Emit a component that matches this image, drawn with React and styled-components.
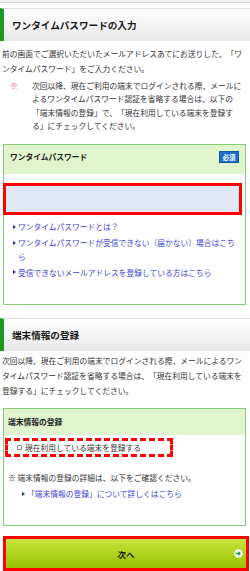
import React from "react";
import styled, { createGlobalStyle } from "styled-components";

const Global = createGlobalStyle`
  html, body { margin: 0; padding: 0; background: #fff; }
  body {
    font-family: "Noto Sans CJK JP", "Noto Sans", sans-serif;
    color: #333;
    width: 250px;
    overflow: hidden;
    text-spacing-trim: space-all;
  }
  * { box-sizing: border-box; }
`;

const Page = styled.div`
  width: 250px;
  display: flex;
  flex-direction: column;
`;

const TopStrip = styled.div`
  height: 3px;
  background: #f1f1f1;
  border-bottom: 1px solid #d9d9d9;
`;

const SectionHeading = styled.h2`
  margin: ${(p) => p.$mt}px 0 0 0;
  height: 33px;
  display: flex;
  align-items: center;
  padding-left: 8px;
  border-left: 4px solid #1d9a24;
  border-top: 1px solid #dedede;
  background: linear-gradient(#ffffff, #e8e8e8);
  font-size: 9.6px;
  font-weight: bold;
  color: #1a1a1a;
  letter-spacing: 0;
`;

const Para = styled.p`
  margin: ${(p) => p.$mt}px 0 0 0;
  padding: 0 5px 0 2px;
  font-size: 7.75px;
  line-height: 15px;
  color: #333;
`;

const Note = styled.div`
  margin-top: 3px;
  padding: 0 5px 0 10px;
  display: grid;
  grid-template-columns: 22px 1fr;
  font-size: 7.75px;
  line-height: 13.33px;
  color: #333;
`;

const Mark = styled.span`
  color: #e0607c;
`;

const Box = styled.section`
  margin: ${(p) => p.$mt}px 4px 0 3px;
  border: 1px solid #86cc74;
  background: #fff;
  padding-bottom: ${(p) => p.$pb}px;
`;

const BoxHeader = styled.div`
  height: ${(p) => p.$h}px;
  background: #e0f4cd;
  display: flex;
  justify-content: space-between;
  align-items: ${(p) => (p.$center ? "center" : "flex-start")};
  padding: ${(p) => (p.$center ? "0 6px 0 4px" : "6px 6px 0 6px")};
`;

const BoxTitle = styled.span`
  font-size: 7.75px;
  line-height: ${(p) => (p.$center ? "12px" : "10px")};
  margin-top: ${(p) => (p.$center ? 0 : 1)}px;
  font-weight: bold;
  color: #222;
`;

const Badge = styled.span`
  width: 20px;
  height: 12px;
  background: #1d6ccc;
  border: 1px solid #1557a8;
  color: #fff;
  font-size: 6.5px;
  font-weight: bold;
  display: flex;
  align-items: center;
  justify-content: center;
`;

const Input = styled.div`
  margin: 9px 3px 0 -1px;
  height: 32px;
  border: 3px solid #ff0000;
  background: #dfe8f4;
`;

const LinkList = styled.ul`
  list-style: none;
  margin: ${(p) => p.$mt}px 0 0 0;
  padding: 0 7px 0 ${(p) => p.$pl}px;
`;

const LinkItem = styled.li`
  position: relative;
  font-size: 7.75px;
  line-height: 13.5px;
  color: #3b44d2;
  margin-bottom: 2.5px;
  &::before {
    content: "";
    position: absolute;
    left: -5px;
    top: 4.5px;
    border-style: solid;
    border-width: 2.5px 0 2.5px 3.5px;
    border-color: transparent transparent transparent #1c2d99;
  }
`;

const CheckRow = styled.label`
  margin: 3px 0 0 1px;
  width: 168px;
  height: 19px;
  border: 3px dashed #ff0000;
  display: flex;
  align-items: center;
  padding-left: 9px;
  gap: 3px;
  font-size: 7.75px;
  color: #333;
`;

const CheckBox = styled.span`
  width: 5px;
  height: 5px;
  border: 1px solid #8a8a8a;
  border-radius: 1px;
  background: #fff;
`;

const SmallNote = styled.p`
  margin: 14px 0 0 0;
  padding-left: 4px;
  font-size: 7.75px;
  line-height: 13.5px;
  color: #333;
`;

const NextButton = styled.button`
  margin: 10px 1px 1px 3px;
  height: 35px;
  border: 3px solid #ff0000;
  background: linear-gradient(#c9e43e, #97c100);
  position: relative;
  display: flex;
  align-items: center;
  justify-content: center;
  font-family: inherit;
  font-size: 8.5px;
  font-weight: bold;
  color: #1a1a1a;
  padding: 0;
`;

const ArrowIcon = styled.svg`
  position: absolute;
  right: 3px;
  top: 50%;
  margin-top: -4.5px;
`;

export default function App() {
  return (
    <Page>
      <Global />
      <TopStrip />
      <SectionHeading $mt={5}>ワンタイムパスワードの入力</SectionHeading>
      <Para $mt={5}>
        前の画面でご選択いただいたメールアドレスあてにお送りした、「ワンタイムパスワード」をご入力ください。
      </Para>
      <Note>
        <Mark>※</Mark>
        <span>
          次回以降、現在ご利用の端末でログインされる際、メールによるワンタイムパスワード認証を省略する場合は、以下の「端末情報の登録」で、「現在利用している端末を登録する」にチェックしてください。
        </span>
      </Note>
      <Box $mt={12} $pb={22}>
        <BoxHeader $h={29}>
          <BoxTitle>ワンタイムパスワード</BoxTitle>
          <Badge>必須</Badge>
        </BoxHeader>
        <Input />
        <LinkList $mt={5} $pl={14}>
          <LinkItem>ワンタイムパスワードとは？</LinkItem>
          <LinkItem>ワンタイムパスワードが受信できない（届かない）場合はこちら</LinkItem>
          <LinkItem>受信できないメールアドレスを登録している方はこちら</LinkItem>
        </LinkList>
      </Box>
      <SectionHeading $mt={13}>端末情報の登録</SectionHeading>
      <Para $mt={2}>
        次回以降、現在ご利用の端末でログインされる際、メールによるワンタイムパスワード認証を省略する場合は、「現在利用している端末を登録する」にチェックしてください。
      </Para>
      <Box $mt={10} $pb={22}>
        <BoxHeader $h={26} $center>
          <BoxTitle $center>端末情報の登録</BoxTitle>
        </BoxHeader>
        <CheckRow>
          <CheckBox />
          <span>現在利用している端末を登録する</span>
        </CheckRow>
        <SmallNote>※ 端末情報の登録の詳細は、以下をご確認ください。</SmallNote>
        <LinkList $mt={3} $pl={23}>
          <LinkItem>「端末情報の登録」について詳しくはこちら</LinkItem>
        </LinkList>
      </Box>
      <NextButton>
        次へ
        <ArrowIcon width="9" height="9" viewBox="0 0 9 9">
          <circle cx="4.5" cy="4.5" r="4.2" fill="#fff" stroke="#d8e8c0" strokeWidth="0.5" />
          <path d="M2 3.7 H4.3 V2 L7 4.5 L4.3 7 V5.3 H2 Z" fill="#1f9a2a" />
        </ArrowIcon>
      </NextButton>
    </Page>
  );
}
